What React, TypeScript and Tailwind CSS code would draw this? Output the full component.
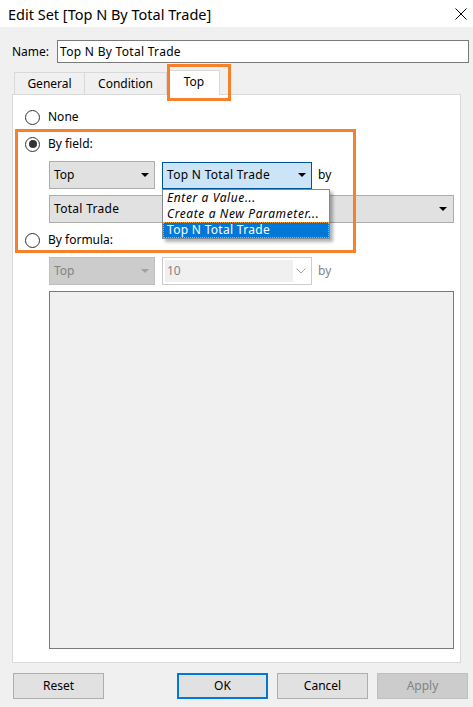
import { useState } from 'react';

function Radio({ checked }: { checked?: boolean }) {
  return (
    <span className="flex h-[15px] w-[15px] shrink-0 items-center justify-center rounded-full border border-[#333333] bg-white">
      {checked && <span className="h-[8px] w-[8px] rounded-full bg-[#333333]" />}
    </span>
  );
}

function Caret({ color = '#000000' }: { color?: string }) {
  return (
    <svg viewBox="0 0 8 4" width="8" height="4" aria-hidden="true">
      <polygon points="0,0 8,0 4,4" fill={color} />
    </svg>
  );
}

function Chevron() {
  return (
    <svg viewBox="0 0 10 6" width="10" height="6" fill="none" stroke="#a0a0a0" strokeWidth="1" aria-hidden="true">
      <polyline points="0.5,0.5 5,5 9.5,0.5" />
    </svg>
  );
}

function DialogButton({ label, variant }: { label: string; variant?: 'default' | 'disabled' }) {
  const base = 'flex h-[26px] w-[91px] items-center justify-center text-[12px]';
  if (variant === 'default') {
    return <div className={`${base} border-2 border-[#0078d7] bg-[#e1e1e1] text-black`}>{label}</div>;
  }
  if (variant === 'disabled') {
    return <div className={`${base} border border-[#bfbfbf] bg-[#cccccc] text-[#838383]`}>{label}</div>;
  }
  return <div className={`${base} border border-[#adadad] bg-[#e1e1e1] text-black`}>{label}</div>;
}

export default function App() {
  const [mode] = useState<'none' | 'field' | 'formula'>('field');

  return (
    <div
      className="relative h-[707px] w-[473px] overflow-hidden bg-[#f0f0f0] text-[12px] leading-[16px] text-black"
      style={{ fontFamily: '"Noto Sans", "Open Sans", sans-serif' }}
    >
      {/* title bar */}
      <div className="flex h-[27px] items-center justify-between bg-white pl-[8px] pr-[6px]">
        <span className="text-[14.5px] leading-[20px]">Edit Set [Top N By Total Trade]</span>
        <svg viewBox="0 0 12 12" width="12" height="12" fill="none" stroke="#000000" strokeWidth="1" aria-hidden="true">
          <line x1="0.5" y1="0.5" x2="11.5" y2="11.5" />
          <line x1="11.5" y1="0.5" x2="0.5" y2="11.5" />
        </svg>
      </div>

      {/* name */}
      <div className="mt-[13px] flex h-[23px] items-center pl-[12px]">
        <span className="w-[45px]">Name:</span>
        <div className="flex h-[23px] w-[412px] items-center border border-[#7a7a7a] bg-white pl-[2px] tracking-[0.3px]">
          Top N By Total Trade
        </div>
      </div>

      {/* tabs */}
      <div className="relative z-10 mt-[7px] flex h-[24px] items-end pl-[14px]">
        <div className="flex h-[22px] w-[71px] items-center justify-center border border-b-0 border-[#d9d9d9] bg-[#f0f0f0]">
          General
        </div>
        <div className="flex h-[22px] w-[82px] items-center justify-center border border-b-0 border-l-0 border-[#d9d9d9] bg-[#f0f0f0]">
          Condition
        </div>
        <div className="-mb-px flex h-[25px] w-[53px] items-center justify-center border border-b-0 border-l-0 border-[#d9d9d9] bg-white pb-[2px] pl-[2px]">
          Top
        </div>
      </div>

      {/* panel */}
      <div className="mx-[12px] flex h-[569px] flex-col border border-[#d9d9d9] bg-white pl-[12px] pt-[14px]">
        <div className="flex h-[16px] items-center gap-[8px]">
          <Radio checked={mode === 'none'} />
          <span>None</span>
        </div>
        <div className="mt-[11px] flex h-[16px] items-center gap-[8px]">
          <Radio checked={mode === 'field'} />
          <span>By field:</span>
        </div>

        <div className="mt-[9px] flex items-center pl-[24px]">
          <div className="flex h-[28px] w-[106px] items-center justify-between border border-[#adadad] bg-[#e1e1e1] pl-[4px] pr-[5px]">
            <span>Top</span>
            <Caret />
          </div>
          <div className="relative ml-[7px] flex h-[27px] w-[150px] items-center justify-between border border-[#005499] bg-[#cce4f7] pl-[4px] pr-[5px]">
            <span className="tracking-[0.3px]">Top N Total Trade</span>
            <Caret />
            <div className="absolute left-[-1px] top-[26px] z-20 flex w-[168px] flex-col border border-[#828790] bg-white shadow-[3px_3px_3px_rgba(0,0,0,0.3)]">
              <span className="h-[16px] pl-[4px] italic leading-[16px] tracking-[0.6px]">Enter a Value...</span>
              <span className="h-[16px] pl-[4px] italic leading-[16px] tracking-[0.6px]">Create a New Parameter...</span>
              <span className="h-[16px] border border-dotted border-[#f0a040] bg-[#0078d7] pl-[3px] leading-[14px] tracking-[0.3px] text-white">
                Top N Total Trade
              </span>
            </div>
          </div>
          <span className="ml-[6px]">by</span>
        </div>

        <div className="mt-[6px] pl-[24px]">
          <div className="flex h-[28px] w-[405px] items-center justify-between border border-[#adadad] bg-[#e1e1e1] pl-[4px] pr-[6px]">
            <span className="tracking-[0.3px]">Total Trade</span>
            <Caret />
          </div>
        </div>

        <div className="mt-[9px] flex h-[16px] items-center gap-[8px]">
          <Radio checked={mode === 'formula'} />
          <span>By formula:</span>
        </div>

        <div className="mt-[9px] flex items-center pl-[24px] text-[#838383]">
          <div className="flex h-[28px] w-[106px] items-center justify-between border border-[#bfbfbf] bg-[#cccccc] pl-[4px] pr-[5px]">
            <span>Top</span>
            <Caret color="#a0a0a0" />
          </div>
          <div className="ml-[7px] flex h-[28px] w-[150px] items-center border border-[#cccccc] bg-white p-[2px]">
            <div className="flex h-full w-[128px] items-center bg-[#f0f0f0] pl-[2px]">10</div>
            <div className="flex flex-1 items-center justify-center">
              <Chevron />
            </div>
          </div>
          <span className="ml-[6px]">by</span>
        </div>

        <div className="ml-[24px] mt-[6px] h-[358px] w-[405px] border border-[#7a7a7a] bg-[#f0f0f0]" />
      </div>

      {/* buttons */}
      <div className="mt-[10px] flex items-center pl-[13px]">
        <DialogButton label="Reset" />
        <div className="ml-[73px] flex gap-[9px]">
          <DialogButton label="OK" variant="default" />
          <DialogButton label="Cancel" />
          <DialogButton label="Apply" variant="disabled" />
        </div>
      </div>

      {/* orange highlight overlays */}
      <div className="pointer-events-none absolute left-[167px] top-[64px] z-30 h-[37px] w-[64px] border-[3px] border-[#f7812b]" />
      <div className="pointer-events-none absolute left-[15px] top-[129px] z-10 h-[124px] w-[341px] border-[3px] border-[#f7812b]" />
    </div>
  );
}
